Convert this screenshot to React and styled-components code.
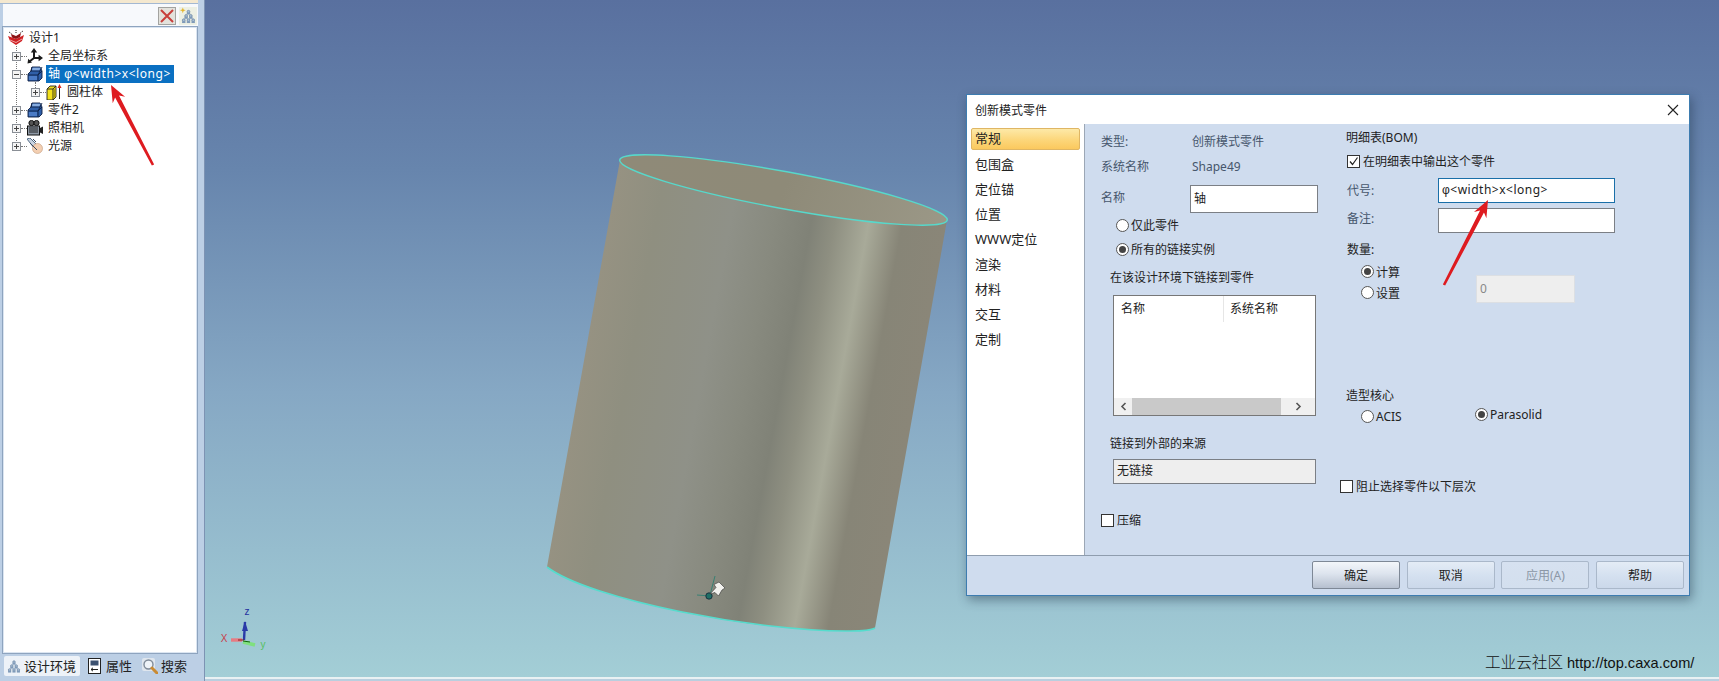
import React from "react";
import styled, { createGlobalStyle } from "styled-components";

const Global = createGlobalStyle`
  html, body { margin: 0; padding: 0; width: 1719px; height: 681px; overflow: hidden; background: #b9cfdf; }
  * { box-sizing: border-box; }
  body { font-family: "Noto Sans", "Noto Sans CJK SC", sans-serif; font-size: 12px; color: #222; }
`;

const Page = styled.div`
  position: relative; display: flex; width: 1719px; height: 681px; overflow: hidden;
`;

/* ---------- left panel ---------- */
const Panel = styled.aside`
  width: 205px; height: 681px; flex: none; display: flex; flex-direction: column;
  background: #bccfe5; border-right: 1px solid #7d93b3; padding-right: 5px;
`;
const TopStrip = styled.div`
  height: 4px; background: #f4e8cf; border-bottom: 1px solid #a3b8d2; margin-right: 1px;
`;
const Toolbar = styled.div`
  height: 22px; margin: 0 1px 0 3px; background: #f7f9fc; display: flex; justify-content: flex-end;
  align-items: center; gap: 3px; padding: 1px 1px 0 0;
`;
const ToolButton = styled.div`
  width: 18px; height: 18px; display: flex; align-items: center; justify-content: center;
  background: ${p => p.$tint || "transparent"}; border: 1px solid ${p => p.$line || "transparent"};
`;
const Tree = styled.div`
  position: relative; height: 628px; margin: 0 1px 0 2px; background: #fff;
  border: 1px solid #8ea4bf; box-shadow: 0 0 0 1px #dbe5f1 inset; padding-top: 2px;
`;
const TreeGuide = styled.div`
  position: absolute; left: 13px; top: 19px; height: 101px; border-left: 1px dotted #777;
`;
const SubGuide = styled.div`
  position: absolute; left: 32px; top: 55px; height: 12px; border-left: 1px dotted #777;
`;
const TreeRow = styled.div`
  display: flex; align-items: center; height: 18px; padding-left: ${p => p.$indent}px; position: relative;
`;
const Expander = styled.span`
  width: 9px; height: 9px; flex: none; border: 1px solid #8a8f96; background: #f4f4f4; position: relative;
  &::before { content: ""; position: absolute; left: 1px; right: 1px; top: 3px; height: 1px; background: #444; }
  &::after { content: ""; display: ${p => (p.$open ? "none" : "block")}; position: absolute; top: 1px; bottom: 1px; left: 3px; width: 1px; background: #444; }
`;
const Dots = styled.span`
  width: 6px; flex: none; border-top: 1px dotted #777;
`;
const NodeIcon = styled.svg`
  width: 16px; height: 16px; flex: none; display: block;
`;
const NodeLabel = styled.span`
  margin-left: ${p => p.$gap ?? 3}px; padding: 0 3px 0 2px; height: 18px; line-height: 17px; font-size: 12px;
  white-space: nowrap; letter-spacing: ${p => (p.$sel ? "0.55px" : "0")};
  background: ${p => (p.$sel ? "#0a70c2" : "transparent")}; color: ${p => (p.$sel ? "#fff" : "#222")};
`;
const Phi = styled.span`
  font-family: "Liberation Sans", sans-serif;
`;
const Tabs = styled.div`
  display: flex; align-items: center; height: 21px; margin-top: 1px; padding-left: 4px;
`;
const Tab = styled.div`
  display: flex; align-items: center; gap: ${p => p.$gap ?? 3}px; height: 20px; font-size: 13px;
  padding-left: ${p => p.$pl ?? 3}px; white-space: nowrap;
  width: ${p => p.$w}px; flex: none; color: #222;
  background: ${p => (p.$active ? "#edf2f8" : "transparent")}; border-radius: 2px;
`;

/* ---------- 3d viewport ---------- */
const Stage = styled.main`
  flex: 1; display: flex; flex-direction: column; height: 681px;
`;
const Viewport = styled.div`
  position: relative; height: 677px; flex: none; overflow: hidden;
  background: linear-gradient(180deg, #59709f 0%, #6785ad 25%, #86a8c4 58%, #a3ced6 100%);
`;
const BottomEdge = styled.div`
  height: 4px; background: #b9cfdf; border-top: 2px solid #e9f1f3;
`;
const Scene = styled.svg`
  position: absolute; left: 0; top: 0; width: 1514px; height: 677px;
`;
const Watermark = styled.div`
  position: absolute; left: 1280px; top: 653px; display: flex; align-items: center; gap: 4px; color: #111;
  font-size: 14.6px; line-height: 20px; white-space: nowrap;
  font-family: "Liberation Sans", "Noto Sans CJK SC", sans-serif;
`;
const WatermarkName = styled.span`
  font-size: 15.6px; font-weight: 300;
`;

/* ---------- dialog ---------- */
const Dialog = styled.section`
  position: absolute; left: 761px; top: 94px; width: 724px; height: 502px; display: flex; flex-direction: column;
  background: #cfdcee; border: 1px solid #3d7cb0; box-shadow: 2px 4px 10px rgba(30, 50, 70, .45);
`;
const TitleBar = styled.header`
  height: 29px; flex: none; background: #fff; display: flex; align-items: center; justify-content: space-between;
  padding: 0 10px 0 8px; font-size: 12px; color: #222;
`;
const CloseIcon = styled.svg`
  width: 12px; height: 12px; display: block;
`;
const DialogMain = styled.div`
  flex: 1; display: flex; min-height: 0;
`;
const Sidebar = styled.nav`
  width: 118px; flex: none; background: #fff; border-right: 1px solid #9ca7b5; padding: 4px 4px 0 4px;
`;
const SideItem = styled.div`
  height: ${p => (p.$active ? 22 : 23)}px; margin-bottom: 2px; line-height: 24px; padding-left: 4px; font-size: 13px;
  color: #222; border-radius: 2px;
  ${p => p.$active && `
    background: linear-gradient(180deg, #fde9a8 0%, #fcd67a 55%, #fbc95e 100%);
    border: 1px solid #dfb664; line-height: 18px; padding-left: 3px;
  `}
`;
const LeftCol = styled.div`
  width: 251px; flex: none; padding: 5px 0 0 16px;
`;
const RightCol = styled.div`
  flex: 1; padding: 3px 0 0 4px;
`;
const InfoRow = styled.div`
  display: grid; grid-template-columns: 91px 1fr; height: 25px; line-height: 26px; color: #46566c;
`;
const NameRow = styled.div`
  display: grid; grid-template-columns: 89px 128px; height: 28px; margin-top: 6px;
`;
const FieldLabel = styled.span`
  line-height: 25px; color: #46566c;
`;
const TextBox = styled.div`
  height: ${p => p.$h || 28}px; width: ${p => p.$w || "auto"}; background: ${p => p.$bg || "#fff"};
  border: 1px solid ${p => p.$line || "#7b7f85"}; padding-left: 3px; line-height: ${p => (p.$h || 28) - 3}px; color: #222;
  margin-top: ${p => p.$mt || 0}px; margin-left: ${p => p.$ml || 0}px; font-size: 12px;
  letter-spacing: ${p => p.$track || 0}px;
`;
const Option = styled.label`
  display: flex; align-items: center; height: ${p => p.$h || 24}px; gap: 3px; color: #222;
  padding-left: ${p => p.$pl || 0}px; margin-top: ${p => p.$mt || 0}px; white-space: nowrap;
  width: ${p => (p.$w ? p.$w + "px" : "auto")}; flex: none;
`;
const RadioMark = styled.span`
  width: 13px; height: 13px; flex: none; border-radius: 50%; background: #fff; border: 1px solid #555;
  display: flex; align-items: center; justify-content: center; margin: 0 -1px 0 1px;
  &::after { content: ""; width: 7px; height: 7px; border-radius: 50%; background: #444; display: ${p => (p.$on ? "block" : "none")}; }
`;
const CheckMark = styled.span`
  width: 13px; height: 13px; flex: none; background: #fff; border: 1px solid #333; display: flex;
`;
const Caption = styled.div`
  height: 20px; line-height: 22px; color: #222; margin-top: ${p => p.$mt || 0}px; margin-left: ${p => p.$ml || 0}px;
`;
const ListBox = styled.div`
  width: 203px; height: 121px; margin: 8px 0 0 12px; background: #fff; border: 1px solid #777;
  display: flex; flex-direction: column; justify-content: space-between;
`;
const ListHead = styled.div`
  display: grid; grid-template-columns: 109px 1fr; height: 26px; line-height: 26px; color: #222;
`;
const HeadCell = styled.span`
  padding-left: ${p => p.$pl}px; ${p => p.$div && "border-left: 1px solid #e6e6e6;"}
`;
const ScrollBar = styled.div`
  height: 17px; display: flex; align-items: stretch; background: #f0f0f0;
`;
const ScrollArrow = styled.div`
  width: ${p => p.$w}px; flex: none; display: flex; align-items: center; justify-content: center;
`;
const ScrollThumb = styled.div`
  width: 149px; background: #c9c9c9;
`;
const FieldRow = styled.div`
  display: grid; grid-template-columns: 98px 177px; margin-top: ${p => p.$mt}px;
`;
const FieldCaption = styled.span`
  padding-left: 7px; line-height: ${p => p.$lh}px; color: #46566c;
`;
const QuantityRow = styled.div`
  display: flex; margin: 2px 0 0 20px;
`;
const RadioStack = styled.div`
  width: 116px; flex: none;
`;
const KernelRow = styled.div`
  display: flex; height: 20px; margin: 1px 0 0 20px;
`;
const Footer = styled.footer`
  height: 40px; flex: none; border-top: 1px solid #8f9dae; display: flex; justify-content: flex-end; align-items: flex-start;
  gap: 6.67px; padding: 5px 5px 0 0;
`;
const Button = styled.div`
  width: 88px; height: 28px; border-radius: 2px; text-align: center; line-height: 27px; font-size: 12px;
  border: 1px solid ${p => (p.$primary ? "#7e8896" : "#aab8ca")};
  color: ${p => (p.$off ? "#8b97a6" : "#222")};
  background: ${p => (p.$primary
    ? "linear-gradient(180deg, #f3f6fa 0%, #dde4ee 45%, #b6c0cf 100%)"
    : p.$off
      ? "linear-gradient(180deg, #d6e1f0 0%, #d3dfee 100%)"
      : "linear-gradient(180deg, #e4ecf6 0%, #d5e1f0 50%, #cbd8ea 100%)")};
`;

/* ---------- overlay ---------- */
const Notes = styled.svg`
  position: absolute; left: 0; top: 0; width: 1719px; height: 681px; pointer-events: none;
`;

/* ---------- icons ---------- */
const PartIcon = () => (
  <NodeIcon viewBox="0 0 16 16">
    <path d="M1 8 L4 5 L5 1 L13 1 L15 5 L15 12 L12 15 L1 15 Z" fill="#2f5fa8" stroke="#0d1f44" strokeWidth=".9" />
    <path d="M5 1 L4 5 L13 5 L15 1 M13 5 L11 9 L1 9 M11 9 V15 M11 9 L15 5" fill="none" stroke="#0d1f44" strokeWidth=".9" />
    <path d="M5.5 1.8 L5 4.2 H12.4 L13.6 1.8 Z" fill="#86ace0" />
    <path d="M2 10 h8 v4 h-8z" fill="#4c7cc6" />
  </NodeIcon>
);
const AxisIcon = () => (
  <NodeIcon viewBox="0 0 16 16">
    <path d="M7 3 V10 M7 10 L13 10 M7 10 L2.5 13.5" stroke="#1c1c1c" strokeWidth="2" fill="none" />
    <path d="M7 0 L3.8 4.6 H10.2 Z M16 10 L11.6 6.8 V13.2 Z M0.5 15.5 L1.2 10.8 L5 14.4 Z" fill="#1c1c1c" />
  </NodeIcon>
);
const BlockIcon = () => (
  <NodeIcon viewBox="0 0 16 16">
    <path d="M1 5 L4 2 L10 2 L10 13 L7 16 L1 16 Z" fill="#f2e01e" stroke="#222" strokeWidth=".9" />
    <path d="M1 5 L7 5 L10 2 M7 5 V16" fill="none" stroke="#222" strokeWidth=".9" />
    <path d="M7.6 6 L9.4 4 V12.6 L7.6 14.6 Z" fill="#a89a10" />
    <path d="M13.5 15 V4" stroke="#222" strokeWidth="1" />
    <path d="M13.5 0 L11.5 4 H15.5 Z" fill="#d9281c" />
  </NodeIcon>
);
const CameraIcon = () => (
  <NodeIcon viewBox="0 0 16 16">
    <circle cx="4.5" cy="3" r="2.6" fill="#555" stroke="#111" />
    <circle cx="9.5" cy="3" r="2.6" fill="#555" stroke="#111" />
    <rect x="0.5" y="6" width="12" height="9" fill="#8f99a6" stroke="#111" />
    <path d="M2 8 h9 M2 10 h9 M2 12 h9" stroke="#222" />
    <path d="M13 8 L16 6.5 V14 L13 12.5 Z" fill="#222" />
  </NodeIcon>
);
const LightIcon = () => (
  <NodeIcon viewBox="0 0 16 16">
    <path d="M0 1 L3 0 L10 7 L7 10 Z" fill="#c9d3e0" stroke="#34506f" strokeWidth=".8" />
    <circle cx="10.5" cy="10.5" r="5" fill="#f3cfb2" stroke="#c59a7a" strokeWidth=".6" />
    <path d="M3 5 L10 12 M6 1 L9 4" stroke="#3a4a60" strokeWidth="1" />
  </NodeIcon>
);
const RootIcon = () => (
  <NodeIcon viewBox="0 0 16 16">
    <path d="M0 6 L8 9 L16 5 L14 11 L8 15 L2 11 Z" fill="#d01f22" />
    <path d="M3 4 L8 6 L13 3 L12 7 L8 9 L4 7.5 Z" fill="#8d1315" />
    <path d="M2 10 L8 12.5 L14 9" stroke="#fff" strokeWidth=".6" fill="none" />
    <path d="M1 2 L4 4 M15 1 L12 3 M8 0 V4" stroke="#222" strokeWidth="1" strokeDasharray="1 1" />
  </NodeIcon>
);
const PyramidMarks = () => (
  <g>
    {[[8, 3.5], [5.5, 8], [10.5, 8], [3, 12.5], [8, 12.5], [13, 12.5]].map(([x, y]) => (
      <g key={`${x}-${y}`}>
        <circle cx={x} cy={y} r="1.5" fill="#a9bfd8" stroke="#54718f" strokeWidth=".6" />
        <rect x={x - 1.8} y={y + 1} width="3.6" height="2" fill="#7f9ab8" />
      </g>
    ))}
  </g>
);
const PropsIcon = () => (
  <svg width="13" height="16" viewBox="0 0 13 16" style={{ display: "block", flex: "none" }}>
    <rect x=".5" y=".5" width="12" height="15" fill="#fff" stroke="#222" />
    <rect x="2.5" y="2.5" width="8" height="5" fill="#3c5170" />
    <path d="M3 11.5 H10 M3 11.5 L5 9.8 M3 11.5 L5 13.2" stroke="#222" fill="none" />
  </svg>
);
const SearchIcon = () => (
  <svg width="16" height="16" viewBox="0 0 16 16" style={{ display: "block", flex: "none" }}>
    <rect x="0" y="0" width="13" height="13" rx="2" fill="#dfe6ee" />
    <circle cx="6.5" cy="6.5" r="4.5" fill="#eef3f8" stroke="#7f8b99" strokeWidth="1.4" />
    <path d="M10 10 L15 15" stroke="#c98b34" strokeWidth="3" strokeLinecap="round" />
  </svg>
);
const Tick = () => (
  <svg width="11" height="11" viewBox="0 0 11 11" style={{ display: "block" }}>
    <path d="M2 5.5 L4.5 8.5 L9.5 1.5" fill="none" stroke="#222" strokeWidth="1.2" />
  </svg>
);
const Chevron = ({ dir }) => (
  <svg width="7" height="9" viewBox="0 0 7 9" style={{ display: "block" }}>
    <path d={dir === "l" ? "M5.5 1 L2 4.5 L5.5 8" : "M1.5 1 L5 4.5 L1.5 8"} fill="none" stroke="#555" strokeWidth="1.6" />
  </svg>
);

/* Draws a tapered red annotation arrow from tail to tip */
const RedArrow = ({ x1, y1, x2, y2 }) => {
  const a = Math.atan2(y2 - y1, x2 - x1);
  const ux = Math.cos(a), uy = Math.sin(a), nx = -uy, ny = ux;
  const L = 17, W = 7;
  const bx = x2 - ux * L, by = y2 - uy * L;
  const nb = x2 - ux * (L - 4), mb = y2 - uy * (L - 4);
  const pts = [
    [x1 - nx * 1.3, y1 - ny * 1.3],
    [nb - nx * 2.2, mb - ny * 2.2],
    [bx - nx * W, by - ny * W],
    [x2, y2],
    [bx + nx * W, by + ny * W],
    [nb + nx * 2.2, mb + ny * 2.2],
    [x1 + nx * 1.3, y1 + ny * 1.3],
  ].map(p => p.join(",")).join(" ");
  return <polygon points={pts} fill="#de1b20" />;
};

const sideItems = ["包围盒", "定位锚", "位置", "WWW定位", "渲染", "材料", "交互", "定制"];

const App = () => (
  <Page>
    <Global />
    <Panel>
      <TopStrip />
      <Toolbar>
        <ToolButton $tint="#e3e2dc" $line="#a3a3a0">
          <svg width="14" height="14" viewBox="0 0 14 14">
            <path d="M1 1 L13 13 M13 1 L1 13" stroke="#c8403c" strokeWidth="2" />
          </svg>
        </ToolButton>
        <ToolButton $tint="#edf0e4">
          <svg width="17" height="17" viewBox="0 0 17 17">
            <g transform="translate(1 1)"><PyramidMarks /></g>
            <path d="M3 0 L3.8 2.2 L6 3 L3.8 3.8 L3 6 L2.2 3.8 L0 3 L2.2 2.2 Z" fill="#e5b52c" />
          </svg>
        </ToolButton>
      </Toolbar>
      <Tree>
        <TreeGuide />
        <SubGuide />
        <TreeRow $indent={5}><RootIcon /><NodeLabel $gap={3}>设计1</NodeLabel></TreeRow>
        <TreeRow $indent={9}><Expander /><Dots /><AxisIcon /><NodeLabel>全局坐标系</NodeLabel></TreeRow>
        <TreeRow $indent={9}><Expander $open /><Dots /><PartIcon /><NodeLabel $sel>轴 <Phi>φ</Phi>&lt;width&gt;x&lt;long&gt;</NodeLabel></TreeRow>
        <TreeRow $indent={28}><Expander /><Dots /><BlockIcon /><NodeLabel $gap={3}>圆柱体</NodeLabel></TreeRow>
        <TreeRow $indent={9}><Expander /><Dots /><PartIcon /><NodeLabel>零件2</NodeLabel></TreeRow>
        <TreeRow $indent={9}><Expander /><Dots /><CameraIcon /><NodeLabel>照相机</NodeLabel></TreeRow>
        <TreeRow $indent={9}><Expander /><Dots /><LightIcon /><NodeLabel>光源</NodeLabel></TreeRow>
      </Tree>
      <Tabs>
        <Tab $active $w={76}>
          <svg width="14" height="16" viewBox="0 0 16 16" style={{ display: "block", flex: "none" }}><PyramidMarks /></svg>
          <span>设计环境</span>
        </Tab>
        <Tab $w={55} $pl={8} $gap={5}><PropsIcon /><span>属性</span></Tab>
        <Tab $w={56} $pl={7}><SearchIcon /><span>搜索</span></Tab>
      </Tabs>
    </Panel>

    <Stage>
      <Viewport>
        <Scene viewBox="205 0 1514 677">
          <defs>
            <linearGradient id="bodyShade" gradientUnits="userSpaceOnUse" x1="620" y1="160" x2="947" y2="220">
              <stop offset="0" stopColor="#969282" />
              <stop offset=".14" stopColor="#8f8f80" />
              <stop offset=".36" stopColor="#8f9188" />
              <stop offset=".49" stopColor="#888a7f" />
              <stop offset=".6" stopColor="#808277" />
              <stop offset=".67" stopColor="#8e8f81" />
              <stop offset=".77" stopColor="#a8aa99" />
              <stop offset=".87" stopColor="#878577" />
              <stop offset="1" stopColor="#8a8678" />
            </linearGradient>
            <linearGradient id="innerShade" gradientUnits="userSpaceOnUse" x1="620" y1="160" x2="947" y2="220">
              <stop offset="0" stopColor="#8f8a78" />
              <stop offset=".5" stopColor="#8e8a78" />
              <stop offset="1" stopColor="#9b9887" />
            </linearGradient>
          </defs>
          <path d="M620 160 L547 567 C 590 600, 760 632, 850 631 Q 870 631 875 628 L947 220 Z" fill="url(#bodyShade)" />
          <ellipse cx="783.5" cy="190" rx="166.5" ry="18.5" transform="rotate(10.4 783.5 190)" fill="url(#innerShade)" stroke="#57d8cb" strokeWidth="1.4" />
          <path d="M547 567 C 590 600, 760 632, 850 631 Q 870 631 875 628" fill="none" stroke="#55dccd" strokeWidth="1.6" />
          {/* anchor pin */}
          <path d="M710 595 L715 576 M697 595 L710 596" stroke="#2f7f72" strokeWidth=".9" fill="none" />
          <circle cx="709" cy="596" r="3.2" fill="#1f6f66" stroke="#123" strokeWidth=".8" />
          <path d="M710 594 L716 587.5 L714 584.5 L719 582 L725 588 L722 590 L718.5 596 L715 592.5 Z" fill="#f2f2ee" stroke="#333" strokeWidth=".6" />
          {/* triad */}
          <path d="M244 640 L245 622" stroke="#2a3aa8" strokeWidth="2.4" />
          <path d="M245 621 L242 631 H248 Z" fill="#2a3aa8" />
          <path d="M231 640 L242 640" stroke="#e77a82" strokeWidth="3.4" />
          <path d="M243 642 L255 645" stroke="#7fe07f" strokeWidth="3.6" />
          <path d="M243 641 L250 642" stroke="#116611" strokeWidth="1" />
          <path d="M238 640 L244 640" stroke="#8a1c1c" strokeWidth="1" />
          <text x="247" y="615" fontSize="10" textAnchor="middle" fill="#1f2fa0" fontFamily="Liberation Sans, sans-serif">z</text>
          <text x="224" y="642" fontSize="10" textAnchor="middle" fill="#c8404a" fontFamily="Liberation Sans, sans-serif">X</text>
          <text x="263" y="648" fontSize="10" textAnchor="middle" fill="#55c060" fontFamily="Liberation Sans, sans-serif">y</text>
        </Scene>

        <Dialog>
          <TitleBar>
            <span>创新模式零件</span>
            <CloseIcon viewBox="0 0 12 12"><path d="M1 1 L11 11 M11 1 L1 11" stroke="#222" strokeWidth="1.1" /></CloseIcon>
          </TitleBar>
          <DialogMain>
            <Sidebar>
              <SideItem $active>常规</SideItem>
              {sideItems.map(s => <SideItem key={s}>{s}</SideItem>)}
            </Sidebar>
            <LeftCol>
              <InfoRow><span>类型:</span><span>创新模式零件</span></InfoRow>
              <InfoRow><span>系统名称</span><span>Shape49</span></InfoRow>
              <NameRow><FieldLabel>名称</FieldLabel><TextBox>轴</TextBox></NameRow>
              <Option $pl={14}><RadioMark />仅此零件</Option>
              <Option $pl={14}><RadioMark $on />所有的链接实例</Option>
              <Caption $mt={6} $ml={9}>在该设计环境下链接到零件</Caption>
              <ListBox>
                <ListHead><HeadCell $pl={7}>名称</HeadCell><HeadCell $pl={6} $div>系统名称</HeadCell></ListHead>
                <ScrollBar>
                  <ScrollArrow $w={18}><Chevron dir="l" /></ScrollArrow>
                  <ScrollThumb />
                  <ScrollArrow $w={34}><Chevron dir="r" /></ScrollArrow>
                </ScrollBar>
              </ListBox>
              <Caption $mt={17} $ml={9}>链接到外部的来源</Caption>
              <TextBox $h={25} $bg="#eeeeee" $w="203px" $mt={6} $ml={12}>无链接</TextBox>
              <Option $h={20} $mt={26}><CheckMark />压缩</Option>
            </LeftCol>
            <RightCol>
              <Caption $ml={6}>明细表(BOM)</Caption>
              <Option $h={20} $mt={4} $pl={7}><CheckMark><Tick /></CheckMark>在明细表中输出这个零件</Option>
              <FieldRow $mt={7}><FieldCaption $lh={25}>代号:</FieldCaption><TextBox $h={25} $line="#1a6fa8" $track={0.5}><Phi>φ</Phi>&lt;width&gt;x&lt;long&gt;</TextBox></FieldRow>
              <FieldRow $mt={5}><FieldCaption $lh={22}>备注:</FieldCaption><TextBox $h={25} /></FieldRow>
              <Caption $mt={6} $ml={7}>数量:</Caption>
              <QuantityRow>
                <RadioStack>
                  <Option $h={21}><RadioMark $on />计算</Option>
                  <Option $h={21}><RadioMark />设置</Option>
                </RadioStack>
                <TextBox $h={28} $w="99px" $mt={14} $bg="#eeeeee" $line="#dcdfe3">
                  <span style={{ color: "#888" }}>0</span>
                </TextBox>
              </QuantityRow>
              <Caption $mt={82} $ml={6}>造型核心</Caption>
              <KernelRow>
                <Option $h={20} $w={114}><RadioMark />ACIS</Option>
                <Option $h={20} $mt={-2}><RadioMark $on />Parasolid</Option>
              </KernelRow>
              <Option $h={20} $mt={50}><CheckMark />阻止选择零件以下层次</Option>
            </RightCol>
          </DialogMain>
          <Footer>
            <Button $primary>确定</Button>
            <Button>取消</Button>
            <Button $off>应用(A)</Button>
            <Button>帮助</Button>
          </Footer>
        </Dialog>

        <Watermark><WatermarkName>工业云社区</WatermarkName><span>http://top.caxa.com/</span></Watermark>
      </Viewport>
      <BottomEdge />
    </Stage>

    <Notes viewBox="0 0 1719 681">
      <RedArrow x1={153} y1={165} x2={111} y2={85} />
      <RedArrow x1={1444} y1={285} x2={1488} y2={200} />
    </Notes>
  </Page>
);

export default App;
